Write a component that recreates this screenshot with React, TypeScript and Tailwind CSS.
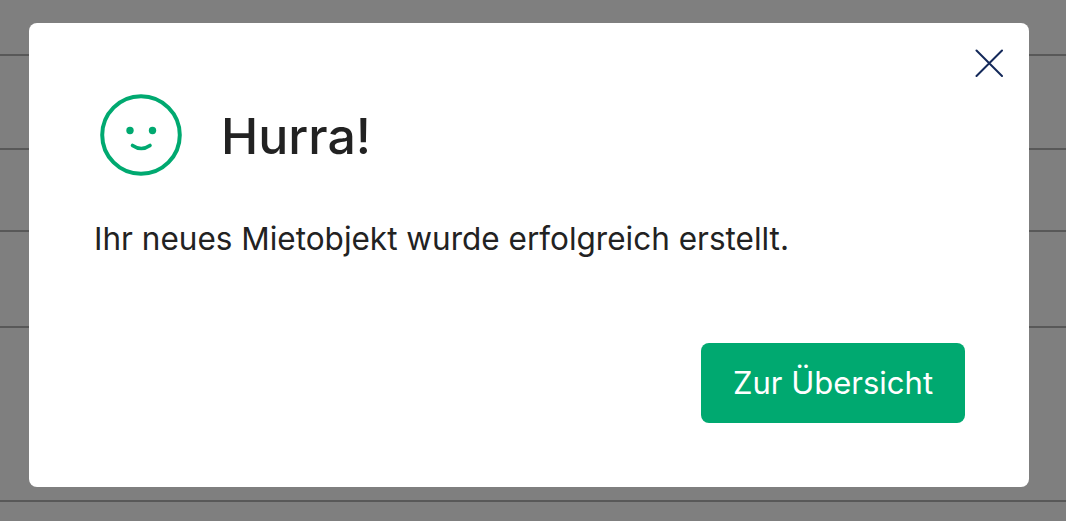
export default function App() {
  return (
    <div className="relative h-[521px] w-[1066px] overflow-hidden bg-[#7f7f7f]" style={{ fontFamily: '"Inter", "Noto Sans", sans-serif' }}>
      <div className="flex flex-col">
        <div className="h-[56px] border-b-2 border-[#585858]" />
        <div className="h-[94px] border-b-2 border-[#585858]" />
        <div className="h-[82px] border-b-2 border-[#585858]" />
        <div className="h-[96px] border-b-2 border-[#585858]" />
        <div className="h-[174px] border-b-2 border-[#585858]" />
      </div>
      <div className="absolute left-[29px] top-[23px] flex h-[464px] w-[1000px] flex-col rounded-[8px] bg-white pl-[65px] pr-[64px] pt-[71px]">
        <button className="absolute right-[26px] top-[26px] text-[#14295a]">
          <svg width="28" height="28" viewBox="0 0 28 28" fill="none" stroke="currentColor" strokeWidth="2" strokeLinecap="round">
            <path d="M1.5 1.5 L27 27 M27 1.5 L1.5 27" />
          </svg>
        </button>
        <div className="flex items-center gap-[39px] pl-[6px]">
          <svg width="82" height="82" viewBox="0 0 82 82" fill="none" stroke="#00a970" className="shrink-0">
            <circle cx="41" cy="41" r="38.8" strokeWidth="4" />
            <circle cx="30" cy="36.5" r="3.7" fill="#00a970" stroke="none" />
            <circle cx="52.5" cy="36.5" r="3.7" fill="#00a970" stroke="none" />
            <path d="M32.5 51.5 Q41.3 57.5 50 51.5" strokeWidth="3.6" strokeLinecap="round" />
          </svg>
          <h1 className="pt-[2px] text-[50px] font-medium leading-[60px] text-[#222222]">Hurra!</h1>
        </div>
        <p className="mt-[39px] text-[31.5px] leading-[48px] text-[#222222]">Ihr neues Mietobjekt wurde erfolgreich erstellt.</p>
        <div className="mt-[80px] flex justify-end">
          <button className="flex h-[80px] w-[264px] items-center justify-center rounded-[8px] bg-[#00a970] text-[31px] text-white">Zur Übersicht</button>
        </div>
      </div>
    </div>
  );
}
